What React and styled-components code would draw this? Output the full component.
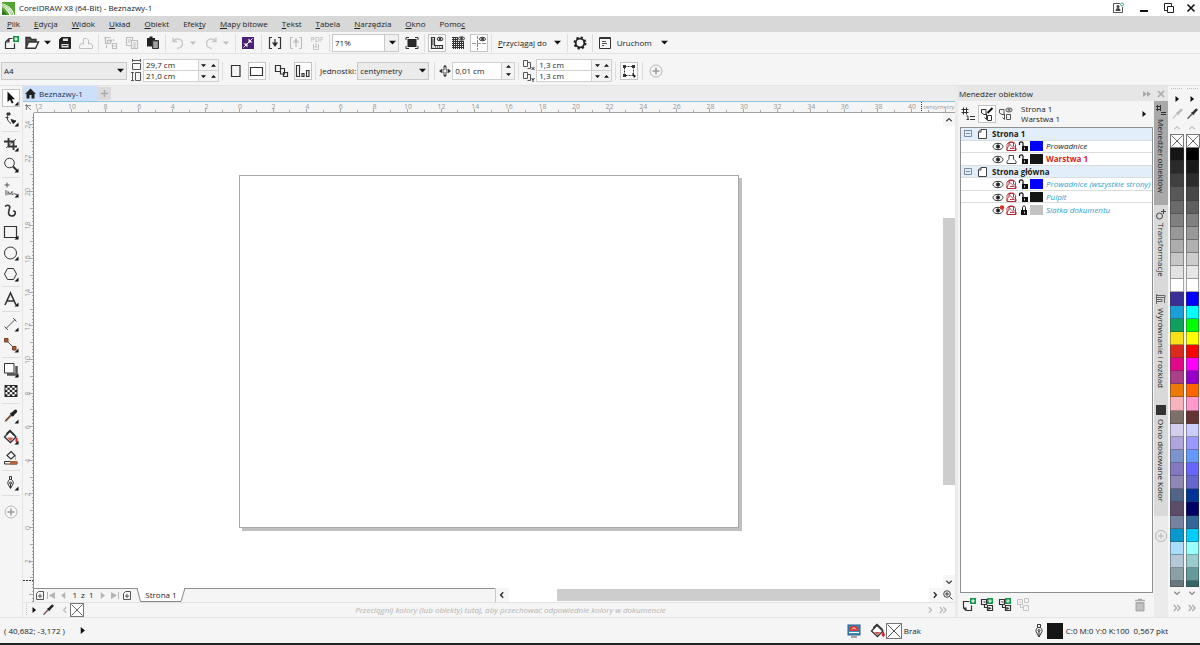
import React from "react";
import styled, { createGlobalStyle, css } from "styled-components";

const GlobalStyle = createGlobalStyle`
  *, *::before, *::after { box-sizing: border-box; }
  body { margin: 0; }
  body, button, input, select {
    font-family: "Open Sans", "Noto Sans", sans-serif;
    font-size: 8px;
    line-height: 12px;
    color: #222;
  }
  button, input, select { margin: 0; padding: 0; border: 0; background: none; border-radius: 0; }
  svg { display: block; flex: none; }
  ul { list-style: none; margin: 0; padding: 0; }
`;

/* ---------- frame ---------- */
const Window = styled.div`
  display: flex;
  flex-direction: column;
  min-height: 100vh;
  background: #f5f5f5;
  border-bottom: 2px solid #1d2422;
`;
const TitleBar = styled.header`
  display: flex;
  align-items: center;
  gap: 4px;
  height: 16px;
  padding: 0 1px 0 2px;
  background: #fff;
`;
const Title = styled.h1`
  flex: 1;
  margin: 0;
  font-size: 8px;
  font-weight: 400;
  line-height: 14px;
`;
const WindowControls = styled.div`
  display: flex;
  gap: 3px;
`;
const WindowButton = styled.button`
  display: grid;
  place-items: center;
  width: ${(p) => p.$w || 20}px;
  height: 16px;
`;
const MenuBar = styled.nav`
  display: flex;
  align-items: center;
  gap: 14px;
  height: 16px;
  padding: 0 7px;
  background: #d8d8d8;
`;
const MenuItem = styled.button`
  white-space: nowrap;
`;
const Toolbar = styled.div`
  display: flex;
  align-items: center;
  gap: 1px;
  height: ${(p) => p.$h}px;
  padding: ${(p) => (p.$tall ? 2 : 0)}px 0 0 1px;
  border-bottom: 1px solid #e3e3e3;
`;
const IconButton = styled.button`
  display: grid;
  place-items: center;
  flex: none;
  width: ${(p) => p.$w || 20}px;
  height: ${(p) => p.$h || 20}px;
  ${(p) =>
    p.$active &&
    css`
      background: #fff;
      border: 1px solid #c4c4c4;
      width: 18px;
      height: 18px;
      margin: 1px;
    `}
`;
const CaretButton = styled(IconButton)`
  width: 8px;
  margin-right: 3px;
`;
const TextButton = styled.button`
  display: flex;
  align-items: center;
  gap: ${(p) => (p.$tight ? 9 : 7)}px;
  padding: 0 ${(p) => (p.$tight ? 1 : 4)}px;
  height: 18px;
  white-space: nowrap;
`;
const Sep = styled.span`
  flex: none;
  width: 1px;
  height: 18px;
  margin: 0 ${(p) => p.$m || 1}px;
  background: #dedede;
`;
const SelectBox = styled.span`
  display: grid;
  grid-template-columns: 1fr 12px;
  align-items: center;
  flex: none;
  width: ${(p) => p.$w}px;
  height: 18px;
  margin-right: ${(p) => p.$mr || 0}px;
  border: 1px solid #c9c9c9;
  background: ${(p) => (p.$white ? "linear-gradient(to left, #f1f1f1 13px, #c9c9c9 13px, #c9c9c9 14px, #fff 14px)" : "#ebebeb")};
  > * { grid-row: 1; }
  > select { grid-column: 1 / 3; appearance: none; height: 16px; padding-left: 2px; }
  > svg { grid-column: 2; pointer-events: none; justify-self: center; }
`;
const Field = styled.span`
  display: flex;
  flex: none;
  width: ${(p) => p.$w}px;
  height: ${(p) => p.$h || 12}px;
  border: 1px solid #d0d0d0;
  background: #fff;
  & + & { border-top: 0; height: 11px; }
  > input { flex: 1; min-width: 0; padding-left: 2px; }
`;
const Arrows = styled.span`
  display: flex;
  flex-direction: ${(p) => (p.$stack ? "column" : "row")};
  flex: none;
  width: ${(p) => (p.$stack ? 13 : 20)}px;
  border-left: 1px solid #d0d0d0;
  background: #f3f3f3;
  > button { flex: 1; display: grid; place-items: center; }
`;
const Stack = styled.span`
  display: flex;
  flex-direction: column;
  flex: none;
`;
const FieldLabel = styled.label`
  padding-left: 2px;
  white-space: nowrap;
`;

/* ---------- work area ---------- */
const Main = styled.main`
  flex: 1;
  display: flex;
  min-height: 0;
`;
const Toolbox = styled.aside`
  display: flex;
  flex-direction: column;
  align-items: center;
  gap: 1px;
  flex: none;
  width: 22px;
  padding-top: 2px;
  > span { width: 18px; height: 1px; margin: 1px 0; background: #dedede; }
`;
const Document = styled.section`
  flex: 1;
  min-width: 0;
  display: flex;
  flex-direction: column;
  border-left: 1px solid #e4e4e4;
`;
const TabStrip = styled.div`
  display: flex;
  align-items: center;
  height: 16px;
  background: #ececec;
  border-bottom: 1px solid #8cc4e4;
`;
const DocTab = styled.button`
  display: flex;
  align-items: center;
  gap: 3px;
  width: 75px;
  height: 15px;
  padding-left: 2px;
  background: #cde0fa;
  color: #1a3054;
`;
const NewTab = styled.button`
  display: grid;
  place-items: center;
  width: 13px;
  height: 13px;
  background: #dadada;
`;
const RulerRow = styled.div`
  display: flex;
  height: 11px;
`;
const RulerCorner = styled.span`
  display: grid;
  place-items: center;
  flex: none;
  width: 11px;
`;
const HRuler = styled.svg`
  flex: 1;
  min-width: 0;
  height: 11px;
  border-bottom: 1px solid #a2a2a2;
  font-size: 7px;
`;
const Body = styled.div`
  flex: 1;
  display: flex;
`;
const VRuler = styled.svg`
  width: 11px;
  height: auto;
  border-right: 1px solid #8f8f8f;
  font-size: 7px;
`;
const Column = styled.div`
  flex: 1;
  min-width: 0;
  display: flex;
  flex-direction: column;
`;
const CanvasRow = styled.div`
  flex: 1;
  display: flex;
  background: #fff;
`;
const Canvas = styled.div`
  flex: 1;
  position: relative;
  overflow: hidden;
`;
const Sheet = styled.div`
  position: absolute;
  left: 205px;
  top: 62px;
  width: 500px;
  height: 353px;
  background: #fff;
  border: 1px solid #a8a8a8;
  box-shadow: 3px 3px 0 #c0c0c0;
`;
const VScroll = styled.div`
  display: flex;
  flex-direction: column;
  width: 12px;
  > button { display: grid; place-items: center; width: 12px; height: 13px; background: #f6f6f6; }
  > i { flex: 92 0 0; }
  > b { flex: 268 0 0; background: #cdcdcd; }
  > i:nth-of-type(2) { flex: 90 0 0; }
`;
const NavRow = styled.div`
  display: flex;
  height: 14px;
`;
const PageNav = styled.div`
  display: flex;
  align-items: center;
  flex: 461 0 0;
  background: linear-gradient(#8f8f8f, #8f8f8f) top / 100% 1px no-repeat, #f5f5f5;
  border-right: 1px solid #c8c8c8;
`;
const PageCount = styled.span`
  width: 28px;
  text-align: center;
  white-space: pre;
`;
const PageTab = styled.button`
  display: grid;
  align-items: center;
  justify-items: center;
  width: 50px;
  height: 14px;
  margin-left: 4px;
  > * { grid-area: 1 / 1; }
  > span { position: relative; }
`;
const HScroll = styled.div`
  display: flex;
  flex: 460 0 0;
  background: #fff;
  > button { display: grid; place-items: center; width: 13px; background: #f6f6f6; }
  > i { flex: 49 0 0; }
  > b { flex: 323 0 0; margin: 1px 0; background: #cdcdcd; }
`;
const DocPalette = styled.div`
  display: flex;
  align-items: center;
  height: 15px;
  padding-right: 6px;
  border-top: 1px solid #e2e2e2;
  > p { flex: 1; margin: 0; padding-left: 14px; text-align: center; font-style: italic; color: #b4b4b4; }
`;
const NoColor = styled.button`
  display: grid;
  width: ${(p) => p.$s}px;
  height: ${(p) => p.$s}px;
  background: #fff;
  border: 1px solid #777;
`;

/* ---------- docker ---------- */
const Docker = styled.section`
  display: flex;
  flex-direction: column;
  flex: none;
  width: 199px;
  border-left: 3px solid #ebebeb;
`;
const DockerHead = styled.header`
  display: flex;
  align-items: center;
  height: 15px;
  padding-left: 1px;
  margin-right: -14px;
  background: #e6e6e6;
  > h2 { flex: 1; margin: 0; font-size: 8px; font-weight: 400; }
`;
const DockerTools = styled.div`
  display: flex;
  align-items: center;
  height: 26px;
  padding: 0 4px 0 1px;
  > p { flex: 1; margin: 0 0 0 6px; line-height: 10px; }
`;
const Tree = styled.div`
  flex: 1;
  margin: 0 1px 0 2px;
  background: #fff;
  border: 1px solid #8c8f94;
`;
const TreeRows = styled.ul`
  display: grid;
  grid-template-rows: repeat(7, 1fr);
  height: 88px;
`;
const TreeRow = styled.li`
  display: flex;
  align-items: center;
  overflow: hidden;
  white-space: nowrap;
  border-bottom: 1px solid #d9dde0;
  padding-left: 31px;
  gap: 1px;
  font-style: italic;
  color: ${(p) => p.$color || "#222"};
  &:last-child { border-bottom: 0; }
  ${(p) =>
    p.$group &&
    css`
      padding-left: 2px;
      gap: 4px;
      background: #e2eef9;
      font-style: normal;
      font-weight: 700;
    `}
  ${(p) => p.$current && css`font-style: normal; font-weight: 700;`}
`;
const LayerColor = styled.span`
  flex: none;
  width: 13px;
  height: 10px;
  margin-right: 2px;
  background: ${(p) => p.$color};
`;
const DockerFoot = styled.footer`
  display: flex;
  align-items: center;
  height: 24px;
  padding: 0 4px 0 2px;
  > span { flex: 1; }
`;
const DockTabs = styled.nav`
  display: flex;
  flex-direction: column;
  align-items: center;
  flex: none;
  width: 14px;
  margin-top: 15px;
  background: #ebebeb;
`;
const DockTab = styled.button`
  display: flex;
  flex-direction: column;
  align-items: center;
  gap: 3px;
  width: 14px;
  height: ${(p) => p.$h}px;
  padding-top: 3px;
  background: ${(p) => (p.$active ? "#a9a9a9" : "#d9d9d9")};
  > span { writing-mode: vertical-rl; white-space: nowrap; line-height: 12px; }
`;
const Palettes = styled.aside`
  display: flex;
  gap: 2px;
  flex: none;
  width: 32px;
  padding: 0 1px 0 2px;
`;
const Palette = styled.div`
  display: flex;
  flex-direction: column;
  flex: 1;
  min-width: 0;
`;
const PaletteButton = styled.button`
  display: grid;
  place-items: center;
  height: ${(p) => p.$h}px;
`;
const Swatches = styled.div`
  flex: 1;
  display: flex;
  flex-direction: column;
`;
const Swatch = styled.button`
  flex: ${(p) => (p.$cut ? 5 : 13)} 0 0;
  background: ${(p) => p.$c};
  border: 1px solid rgba(60, 60, 60, 0.45);
  border-top: 0;
`;

/* ---------- status ---------- */
const StatusBar = styled.footer`
  display: flex;
  align-items: center;
  height: 26px;
  padding: 0 32px 0 4px;
  border-top: 1px solid #e4e4e4;
`;
const Coords = styled.span`
  width: 75px;
`;
const Spacer = styled.span`
  flex: 1;
`;
const StatusGroup = styled.span`
  display: flex;
  align-items: center;
  width: ${(p) => (p.$w ? p.$w + "px" : "auto")};
  white-space: pre;
`;
const OutlineColor = styled.span`
  width: 16px;
  height: 16px;
  margin-right: 3px;
  background: #151515;
`;

/* ---------- icons ---------- */
const Svg = ({ s = 16, w, h, children, c = "#333", sw = 1, ...rest }) => (
  <svg
    width={w || s}
    height={h || s}
    viewBox={`0 0 ${w || s} ${h || s}`}
    fill="none"
    stroke={c}
    strokeWidth={sw}
    aria-hidden="true"
    {...rest}
  >
    {children}
  </svg>
);
const Tri = ({ d = "down", c = "#111", s = 7 }) => {
  const paths = {
    down: `M0 ${s / 4}H${s}L${s / 2} ${s * 0.8}Z`,
    up: `M0 ${s * 0.75}H${s}L${s / 2} ${s / 5}Z`,
    right: `M${s / 4} 0V${s}L${s * 0.85} ${s / 2}Z`,
    left: `M${s * 0.75} 0V${s}L${s * 0.15} ${s / 2}Z`,
  };
  return (
    <Svg s={s}>
      <path d={paths[d]} fill={c} stroke="none" />
    </Svg>
  );
};
const Chevron = ({ d = "down", c = "#444", double, s = 8 }) => {
  const rot = { right: 0, down: 90, left: 180, up: 270 }[d];
  return (
    <Svg s={s} c={c} sw={1.3}>
      <g transform={`rotate(${rot} ${s / 2} ${s / 2})`}>
        {double ? <path d="M0.8 1L3.6 4L0.8 7M4.3 1L7.1 4L4.3 7" /> : <path d="M2.8 1.3L5.4 4L2.8 6.7" />}
      </g>
    </Svg>
  );
};
const Plus = () => (
  <Svg c="#b5b5b5">
    <circle cx="8" cy="8" r="6" />
    <path d="M8 4.5v7M4.5 8h7" stroke="#999" strokeWidth="1.4" />
  </Svg>
);
const Cross = () => (
  <Svg viewBox="0 0 12 12" width="100%" height="100%" c="#444" sw={0.8}>
    <path d="M0.5 0.5L11.5 11.5M11.5 0.5L0.5 11.5" />
  </Svg>
);
const Dropper = ({ c = "#222", tip = "#a88", s = 14 }) => (
  <svg width={s} height={s} viewBox="0 0 14 14" fill="none" aria-hidden="true">
    <path d="M2 12.200L8 6.200" stroke={tip} strokeWidth="1.800" />
    <path d="M1.500 12.700L7 6.200" stroke={c} strokeWidth="0.600" />
    <path d="M6.600 5L9.200 7.600" stroke={c} strokeWidth="1.600" />
    <path d="M8.300 5.900L12 2.200" stroke={c} strokeWidth="3" strokeLinecap="round" />
  </svg>
);
const Bucket = () => (
  <Svg>
    <path d="M7 2L13 8L7.500 13.500L1.500 8Z" fill="#fff" strokeWidth="1.300" />
    <path d="M4 9H10.500L7.500 12Z" fill="#cf5a50" stroke="none" />
    <path d="M3.500 5L7 1.800L12.500 7" strokeWidth="1.800" />
    <path d="M13 9c1.600 2 1.800 4 .3 4.500c-1.500-.4-1.200-2.500-.3-4.500Z" fill="#c22" stroke="#c22" />
  </Svg>
);
const Nib = () => (
  <Svg>
    <path d="M6.500 1.500h3v3h-3zM6.500 4.500C5.200 6 4.800 7.300 5 8.500L8 14l3-5.500c.2-1.200-.2-2.500-1.500-4M8 8.500V14" />
    <circle cx="8" cy="7.500" r="1" />
  </Svg>
);
const Flyout = () => <path d="M15.500 11.500v4h-4z" fill="#111" stroke="none" />;
const PlusBadge = ({ x, y }) => (
  <g stroke="none">
    <rect x={x} y={y} width="6" height="6" fill="#16964a" />
    <path d={`M${x + 3} ${y + 1.2}v3.6M${x + 1.2} ${y + 3}h3.6`} stroke="#fff" />
  </g>
);

const icons = {
  new: <Svg sw={1.2}><path d="M9.500 3.500H6L2.500 7V13.500H11.500V8.500M6 3.500V7H2.500" /><PlusBadge x={10} y={1} /></Svg>,
  open: (
    <Svg>
      <path d="M2 13V2.500H6L7.500 4.500H12V7" strokeWidth="1.400" fill="#555" />
      <path d="M2 13.200L4.500 7H14.500L11.500 13.200Z" fill="#fff" strokeWidth="1.400" />
    </Svg>
  ),
  save: (
    <Svg>
      <path d="M4.500 2.500H13.500V13.500H2.500V4.500Z" fill="#222" stroke="#222" />
      <path d="M6 3.500h5v2.500h-5zM4.500 9h7v3.500h-7z" fill="#e4e4e4" stroke="none" />
      <path d="M5.500 10.500h5" />
    </Svg>
  ),
  print: <Svg c="#c2c2c2"><path d="M5.500 9.500V3.500H9L10.500 5V9.500M5 8.500H3L1.500 11V13.500H14.500V11L13 8.500H11" /></Svg>,
  cut: <Svg c="#bdbdbd" sw={1.2}><path d="M2 4V2.500h5.500M2.500 3v5.500h2M5.500 5h3v2M4.500 5.500h3v3h-3zM3.500 10v3M9.500 8.500h4v5h-4zM10.500 11h2M10.500 4v2" /></Svg>,
  copy: <Svg c="#bdbdbd" sw={1.2}><path d="M7 10.500H2.500V2.500H8.500V5M4 5h3M4 7h2M7.500 5.500h6v8h-6zM9 8h3M9 10h3M9 12h3" /></Svg>,
  paste: (
    <Svg>
      <path d="M2 3H10V11.500H2Z" fill="#222" stroke="none" />
      <path d="M4.500 2.500h3" stroke="#222" strokeWidth="2" />
      <path d="M7.500 5.500h6v8h-6z" fill="#777" stroke="#333" />
      <path d="M8.500 8h4M8.500 10h4M8.500 12h4" stroke="#ccc" />
    </Svg>
  ),
  undo: <Svg c="#c4c4c4" sw={1.3}><path d="M3 2.500v4h4M3.500 6C6 2.500 12.500 3.500 12.500 8.500c0 3-2.500 4.800-5.500 4.800" /></Svg>,
  redo: <Svg c="#c4c4c4" sw={1.3}><path d="M13 2.500v4H9M12.500 6C10 2.500 3.500 3.500 3.500 8.500c0 3 2.500 4.800 5.500 4.800" /></Svg>,
  launch: (
    <Svg>
      <rect x="2" y="2" width="12" height="12" fill="#4a2079" stroke="none" />
      <path d="M3.500 12.500L12.500 3.500" stroke="#fff" strokeWidth="1" />
      <path d="M8.500 3.500v4h4zM3.500 8.500h4v4z" fill="#fff" stroke="none" />
    </Svg>
  ),
  import: <Svg sw={1.2}><path d="M5 2.500H2.500V13.500H5M11 2.500H13.500V13.500H11M8 4V11" /><path d="M6 8L8 11L10 8Z" fill="#222" /></Svg>,
  export: <Svg c="#c0c0c0" sw={1.2}><path d="M5 2.500H2.500V13.500H5M11 2.500H13.500V13.500H11M8 12V5" /><path d="M6 7L8 4L10 7Z" fill="#c0c0c0" /></Svg>,
  full: (
    <Svg>
      <rect x="4" y="4.500" width="8" height="7" fill="#2c2c2c" stroke="#222" />
      <path d="M2 5V2.500H5M11 2.500H14V5M2 11V13.500H5M11 13.500H14V11" />
    </Svg>
  ),
  rulers: (
    <Svg>
      <path d="M2.500 2.500H5.500V10.500H13.500V13.500H2.500Z" fill="#ddd" strokeWidth="1.200" />
      <path d="M3 5h1.500M3 7h1.500M3 9h1.500M6 12h1M8 12h1M10 12h1" />
      <ellipse cx="11" cy="4" rx="3" ry="1.800" /><circle cx="11" cy="4" r="1" fill="#333" />
    </Svg>
  ),
  grid: (
    <Svg c="#333">
      <path d="M2 2.500H8M2 4.500H8M2 6.500H14M2 8.500H14M2 10.500H14M2 12.500H14M3.500 2V14M5.500 2V14M7.500 2V14M9.500 6V14M11.500 6V14M13.500 6V14" />
      <ellipse cx="11.500" cy="3.500" rx="3" ry="1.700" /><circle cx="11.500" cy="3.500" r="1" fill="#333" />
    </Svg>
  ),
  guides: (
    <Svg>
      <path d="M6.500 1V15" strokeDasharray="3 1" stroke="#888" /><path d="M1 8.500H15" strokeDasharray="4 1" stroke="#999" />
      <ellipse cx="11.500" cy="4" rx="3" ry="1.800" /><circle cx="11.500" cy="4" r="1" fill="#333" />
    </Svg>
  ),
  gear: (
    <Svg>
      <circle cx="8" cy="8" r="5.500" stroke="#222" strokeWidth="2" strokeDasharray="2.200 2.120" />
      <circle cx="8" cy="8" r="4.300" stroke="#222" strokeWidth="1.800" />
    </Svg>
  ),
  run: <Svg><path d="M2.500 2.500H13.500V13.500H2.500ZM2.500 3.500H13.500" /><path d="M5 6.500h4M5 8.500h5M5 10.500h2" stroke="#555" /></Svg>,
  portrait: <Svg><path d="M3.500 2.500H12V13.500H3.500Z" strokeWidth="1.200" /></Svg>,
  landscape: <Svg><path d="M1.500 4.500H13.500V12.500H1.500Z" strokeWidth="1.200" /></Svg>,
  pages: <Svg><path d="M9.500 9.500h4v4h-4zM6.500 5.500h4v5.500h-4zM1.500 2.500h5v6h-5z" fill="#f5f5f5" strokeWidth="1.200" /></Svg>,
  current: <Svg><path d="M1.500 2.500h3v11h-3zM7 10.500h2v3h-2zM11.500 7.500h2.500v6h-2.500z" strokeWidth="1.200" /></Svg>,
  nudge: (
    <Svg w={12} h={14}>
      <path d="M4 5h4v4h-4z" stroke="#555" />
      <path d="M6 .8L8.200 3.500H3.800ZM6 13.200L8.200 10.500H3.800ZM0 7L3 4.800V9.200ZM12 7L9 4.800V9.200Z" fill="#333" stroke="none" />
    </Svg>
  ),
  bounds: (
    <Svg>
      <path d="M3.500 3.500H12.500V12.500H3.500Z" strokeDasharray="2 1" />
      <path d="M2 2h3v3H2zM11 2h3v3h-3zM2 11h3v3H2z" fill="#333" stroke="none" /><path d="M11 10l4 3l-2 2z" fill="#111" stroke="none" />
    </Svg>
  ),
  objects: <Svg><path d="M1.500 3.500h7M1.500 6.500h7M3.500 1.500v7M6.500 1.500v7M6.500 10h1.500v3.500h-1.500M10 10.500h5M10 13.500h5M8 13.500h1" /></Svg>,
  editLayers: (
    <Svg>
      <path d="M2.500 3.500h4.500v5h-2l-2.500-1.500zM7.500 7.500v6l-2-2M8.500 9.500h4v5h-4z" />
      <path d="M8.500 7L13.500 2" stroke="#111" strokeWidth="2" />
    </Svg>
  ),
  viewLayers: (
    <Svg c="#555">
      <path d="M1.500 3.500h4.500v5h-2l-2.500-1.500zM6.500 7.500v6l-2-2M8.500 8.500h4v5h-4z" />
      <ellipse cx="11" cy="4" rx="3.200" ry="2" /><circle cx="11" cy="4" r="1" />
    </Svg>
  ),
  newLayer: <Svg sw={1.2}><path d="M8.500 4.500H2.500V11L5 13.500H10.500V8.500M2.500 11H5V13.500" /><PlusBadge x={9} y={1} /></Svg>,
  newMaster: (
    <Svg>
      <path d="M2.500 2.500h5v5h-5zM4.500 5h2M5.500 7.500v3h3M8.500 8.500h5v5h-5zM10 10v2l2-1" strokeWidth="1.200" /><PlusBadge x={8} y={1} />
    </Svg>
  ),
  masterOff: <Svg c="#c4c4c4"><path d="M2.500 2.500h5v5h-5zM4.500 5h2M5.500 7.500v3h3M8.500 8.500h5v5h-5zM9.500 1.500h4v4h-4z" /></Svg>,
  trash: (
    <Svg>
      <path d="M3 3.500h10M6 2.500h4" stroke="#aaa" strokeWidth="1.600" /><path d="M4 5.500h8v8.500H4z" fill="#b4b4b4" stroke="#aaa" />
      <path d="M6 7v6M8 7v6M10 7v6" stroke="#ddd" strokeWidth=".6" />
    </Svg>
  ),
};

const tools = [
  ["Wskaźnik", <Svg><path d="M4.500 1.500V12L7 9.800L8.800 13.500L10.500 12.700L8.800 9.200H12Z" fill="#111" stroke="none" /><Flyout /></Svg>, true],
  ["Kształt", <Svg><path d="M5 3.500C3.500 6 4 10 8 12.500M2.500 6.500h3" /><path d="M4 2h3v2H4z" fill="#444" /><path d="M8 8.500l5 1.500l-3 2.500z" fill="#111" /><Flyout /></Svg>],
  null,
  ["Kadrowanie", <Svg sw={1.8}><path d="M1 5.500H10.500V14M5.500 2V10.500H14" /><path d="M3 12L13 3" strokeWidth=".8" /><Flyout /></Svg>],
  ["Lupka", <Svg><circle cx="6.500" cy="6" r="4.800" /><path d="M10 9.500L14 13.500" strokeWidth="2" /><Flyout /></Svg>],
  null,
  ["Krzywa", <Svg c="#555"><path d="M4 .5v5M1.500 3h5M3 8v5.500M5 13V9.500l2 3l2-3v3c1 1 2-2 3-.5l2 .5" /><Flyout /></Svg>],
  ["Środki artystyczne", <Svg sw={1.6}><path d="M2 3.500C5 1 7.500 2.500 6.500 5.500C5 10 5 12.500 8.500 13C13 13 13.500 7.500 10 8" /></Svg>],
  ["Prostokąt", <Svg><path d="M1.500 2.500H13.500V13.500H1.500Z" strokeWidth="1.200" /><Flyout /></Svg>],
  ["Elipsa", <Svg><circle cx="7.500" cy="8" r="6" /><Flyout /></Svg>],
  ["Wielokąt", <Svg><path d="M4.500 2.500H10.500L13.500 8L10.500 13.500H4.500L1.500 8Z" /><Flyout /></Svg>],
  null,
  ["Tekst", <Svg sw={1.6}><path d="M2 14L7.500 2L13 14M4 10H11" /><Flyout /></Svg>],
  null,
  ["Wymiar", <Svg><path d="M3 12.500L12 3.500M1.500 10.500L5 14M10 2L13.500 5.500" stroke="#555" /><Flyout /></Svg>],
  ["Łącznik", <Svg><path d="M4 4L12 12" stroke="#555" /><path d="M1.500 1.500h3.500v3.500h-3.500zM9.500 9.500h3.500v3.500h-3.500z" fill="#a85c38" stroke="#7a3d22" /><Flyout /></Svg>],
  null,
  ["Cień", <Svg><path d="M4 12.500h9.500V4" stroke="#555" strokeWidth="2.500" /><path d="M1.500 1.500H11V11H1.500Z" fill="#fff" /><Flyout /></Svg>],
  [
    "Przezroczystość",
    <Svg>
      <rect x="2" y="2.500" width="12" height="11" fill="#fff" />
      {[0, 1, 2, 3, 4].map((r) => [0, 1, 2].map((k) => (
        <rect key={r + "-" + k} x={2 + k * 4.8 + (r % 2) * 2.4} y={2.5 + r * 2.2} width={r % 2 && k === 2 ? 0 : 2.4} height="2.200" fill="#222" stroke="none" />
      )))}
    </Svg>,
  ],
  null,
  ["Kroplomierz", <Svg><path d="M2.500 13L9 6.500" stroke="#a0664a" strokeWidth="2" /><path d="M1.800 13.500L8 6.500" strokeWidth=".7" /><path d="M7.500 5L10.500 8" stroke="#222" strokeWidth="1.800" /><path d="M9.500 6.200L12.500 3.200" stroke="#222" strokeWidth="3.400" strokeLinecap="round" /><Flyout /></Svg>],
  ["Wypełnienie", <Svg><path d="M7 2L13 8L7.500 13.500L1.500 8Z" fill="#fff" strokeWidth="1.400" /><path d="M4 8.500H10.500L7.500 12Z" fill="#cf5a50" stroke="none" /><path d="M3.500 5L7 1.800L12 6.800" strokeWidth="1.800" /><path d="M13.500 9v4" stroke="#c22" strokeWidth="2" /><Flyout /></Svg>],
  ["Inteligentne wypełnienie", <Svg><path d="M8 1.500L12 5.500L8 9L4 5.500Z" fill="#fff" strokeWidth="1.200" /><path d="M1.500 11.500H14V14H1.500Z" fill="#fff" /><path d="M7 11h7v3.500H7z" fill="#b0643c" stroke="none" /><path d="M12.500 6v4" stroke="#e0a080" /></Svg>],
  null,
  ["Pióro konturu", <Svg><path d="M6.500 1.500h2v3h-2zM6.500 4.500C5 6 4.500 7.500 5 9L7.500 13.500L10 9c.5-1.500 0-3-1.500-4.500M7.500 9v4" /><circle cx="7.500" cy="8" r="1" /><Flyout /></Svg>],
  null,
  ["Dostosuj", <Plus />, false, 28],
];

const LayerEye = ({ off }) => (
  <Svg w={13} h={10}>
    <ellipse cx="6" cy="5.500" rx="5" ry="3.200" fill="#fff" /><circle cx="6" cy="5.500" r="1.700" fill="#222" />
    {off && <circle cx="10" cy="2.500" r="2.200" fill="#d32" stroke="none" />}
  </Svg>
);
const LayerPrint = ({ off }) => (
  <Svg w={11} h={10} c={off ? "#b22b36" : "#444"}>
    <path d="M3 5.500V1.500H7.500V5.500M2.500 5.500L1 7.500V9.500H10V7.500L8.500 5.500" />
    {off && <path d="M1 3.500C2 0 8.500 0 9.500 3.500V9.500M1 3.500V9M2.500 2L9 8.500M4 7.500h4" strokeWidth=".9" />}
  </Svg>
);
const LayerLock = ({ locked }) => (
  <Svg w={11} h={10} c="#111">
    {locked ? <path d="M4.500 5V2.500C4.500 .5 7.500 .5 7.500 2.500V5" /> : <path d="M1.500 4V2C1.500 .5 5 .5 5 2V5" strokeWidth="1.200" />}
    <rect x={locked ? 3 : 4} y="5" width="6" height="5" fill="#111" stroke="none" />
    <path d="M6.500 6.500v2" stroke="#fff" strokeWidth=".8" />
  </Svg>
);
const PageIcon = () => (
  <Svg w={11} h={11} c="#444"><path d="M4 1.500H9.500V10.500H1.500V4ZM4 1.500V4H1.500" fill="#fff" /></Svg>
);

/* ---------- data ---------- */
const menu = [
  ["", "P", "lik"], ["", "E", "dycja"], ["", "W", "idok"], ["", "U", "kład"], ["", "O", "biekt"], ["Efek", "t", "y"],
  ["", "M", "apy bitowe"], ["", "T", "ekst"], ["", "T", "abela"], ["", "N", "arzędzia"], ["", "O", "kno"], ["Pomo", "c", ""],
];
const cmyk = [
  "#161616", "#2a2a2a", "#404040", "#585858", "#6a6a6a", "#808080", "#989898", "#adadad", "#c6c6c6", "#e2e2e2", "#fff",
  "#3a2f96", "#1a9fd8", "#10a05c", "#f7e01a", "#dc2a20", "#e0098a", "#a8408a", "#ec7a08", "#f8b4bc", "#7c7068", "#d4ceee",
  "#b0a4dc", "#7c94cc", "#8478c0", "#9088b4", "#506488", "#5c4c68", "#7484a0", "#0898cc", "#a8dcf8", "#b4c8d8", "#8ca0a8", "#6c7880",
];
const rgb = [
  "#000", "#191919", "#2c2c2c", "#484848", "#606060", "#808080", "#999", "#b0b0b0", "#ccc", "#e6e6e6", "#fff",
  "#00f", "#0ff", "#0f0", "#ff0", "#f00", "#f0f", "#90c", "#f60", "#f9c", "#633", "#ccf",
  "#99f", "#69f", "#66f", "#66c", "#039", "#006", "#369", "#0cf", "#9ff", "#9cc", "#699", "#366",
];
const layers = [
  { group: "Strona 1" },
  { name: "Prowadnice", swatch: "#00f", noPrint: true },
  { name: "Warstwa 1", swatch: "#151515", color: "#d8231b", current: true },
  { group: "Strona główna" },
  { name: "Prowadnice (wszystkie strony)", swatch: "#00f", noPrint: true, color: "#2ba3d4" },
  { name: "Pulpit", swatch: "#151515", noPrint: true, color: "#2ba3d4" },
  { name: "Siatka dokumentu", swatch: "#c2c2c2", noPrint: true, hidden: true, locked: true, color: "#2ba3d4" },
];
const CM = 16.8;

/* ---------- parts ---------- */
function Spin({ label, value, w, h, stack }) {
  return (
    <Field $w={w} $h={h}>
      <input aria-label={label} defaultValue={value} />
      <Arrows $stack={stack}>
        <button aria-label={label + " +"}><Tri d={stack ? "up" : "down"} s={5} /></button>
        <button aria-label={label + " -"}><Tri d={stack ? "down" : "up"} s={5} /></button>
      </Arrows>
    </Field>
  );
}

function HorizontalRuler() {
  const zero = 205;
  const ticks = [];
  for (let i = -60; i <= 213; i++) {
    const x = Math.round(zero + (i * CM) / 5) + 0.5;
    const len = i % 10 === 0 ? 4 : i % 5 === 0 ? 3 : 1;
    ticks.push(`M${x} 11v-${len}`);
  }
  const labels = [];
  for (let n = -12; n <= 40; n += 2) labels.push(n);
  return (
    <HRuler aria-label="Linijka pozioma">
      <path d={ticks.join("")} stroke="#aaa" />
      {labels.map((n) => (
        <text key={n} x={zero + n * CM + 1} y="7" textAnchor="middle" fill="#999">{Math.abs(n)}</text>
      ))}
      <path d="M887.500 0v11" stroke="#333" strokeDasharray="1 1" />
      <text x="889" y="7" fontSize="6" fill="#999">centymetry</text>
    </HRuler>
  );
}

function VerticalRuler() {
  const zero = 414;
  const ticks = [];
  for (let i = -22; i <= 122; i++) {
    const y = Math.round(zero - (i * CM) / 5) + 0.5;
    const len = i % 10 === 0 ? 4 : i % 5 === 0 ? 3 : 1;
    ticks.push(`M10 ${y}h-${len}`);
  }
  const labels = [];
  for (let n = -2; n <= 24; n += 2) labels.push(n);
  return (
    <VRuler aria-label="Linijka pionowa">
      <path d={ticks.join("")} stroke="#aaa" />
      {labels.map((n) => (
        <text key={n} transform={`translate(7 ${zero - n * CM + 1}) rotate(-90)`} textAnchor="middle" fill="#999">{Math.abs(n)}</text>
      ))}
      <path d="M0 467.500h10" stroke="#333" strokeDasharray="2 1" />
    </VRuler>
  );
}

function ColorPalette({ colors, name, enabled }) {
  return (
    <Palette aria-label={name}>
      <Svg w={13} h={5} c="#bbb"><path d="M1 2.500h11" strokeDasharray="1 1" /></Svg>
      <PaletteButton $h={15} aria-label="Menu palety"><Tri d="right" s={6} /></PaletteButton>
      <PaletteButton $h={16} aria-label="Kroplomierz"><Dropper s={12} c={enabled ? "#333" : "#bbb"} tip={enabled ? "#777" : "#d0d0d0"} /></PaletteButton>
      <PaletteButton $h={12} aria-label="W górę"><Chevron d="up" c="#c4c4c4" /></PaletteButton>
      <NoColor $s={14} aria-label="Brak koloru"><Cross /></NoColor>
      <Swatches>
        {colors.map((c, i) => (
          <Swatch key={i} $c={c} $cut={i === colors.length - 1} aria-label={c} />
        ))}
      </Swatches>
      <PaletteButton $h={12} aria-label="W dół"><Chevron c="#888" /></PaletteButton>
      <PaletteButton $h={18} aria-label="Rozwiń"><Chevron d="right" double c="#aaa" /></PaletteButton>
    </Palette>
  );
}

export default function App() {
  return (
    <Window>
      <GlobalStyle />
      <TitleBar>
        <Svg s={13}>
          <rect width="13" height="13" fill="#55a630" stroke="none" />
          <path d="M0 1.500C6 2.500 11 7 12.500 13H7.500C5.500 9 3 6 0 5Z" fill="#fff" stroke="none" />
          <path d="M0 2.500C6 4 9.500 8 11 13M0 4C5 5.500 8 9 9.500 13" stroke="#55a630" strokeWidth=".7" />
          <path d="M0 8C2 9 4 11 5 13H0Z" fill="#2f7a22" stroke="none" />
        </Svg>
        <Title>CorelDRAW X8 (64-Bit) - Beznazwy-1</Title>
        <WindowControls>
          <WindowButton $w={24} aria-label="Konto">
            <Svg s={12}><path d="M8 1.500H1.500V10.500H10.500V5" stroke="#555" /><circle cx="6" cy="4.500" r="1.500" fill="#444" stroke="none" /><path d="M3.500 9c0-4 5-4 5 0z" fill="#444" stroke="none" /><circle cx="10" cy="2.500" r="1.500" stroke="#5bb08f" /></Svg>
          </WindowButton>
          <WindowButton $w={22} aria-label="Minimalizuj"><Svg s={10} c="#111" sw={2}><path d="M1 8h8" /></Svg></WindowButton>
          <WindowButton $w={22} aria-label="Przywróć"><Svg s={10} c="#222"><path d="M3.500 7.500H.5V.5H7.500V3.500M3.500 3.500H9.500V9.500H3.500Z" /></Svg></WindowButton>
          <WindowButton $w={16} aria-label="Zamknij"><Svg s={10} c="#111" sw={1.6}><path d="M1.500 1.500L8.500 8.500M8.500 1.500L1.500 8.500" /></Svg></WindowButton>
        </WindowControls>
      </TitleBar>
      <MenuBar>
        {menu.map(([a, u, b]) => (
          <MenuItem key={a + u + b}>{a}<u>{u}</u>{b}</MenuItem>
        ))}
      </MenuBar>

      <Toolbar $h={22}>
        <IconButton aria-label="Nowy">{icons.new}</IconButton>
        <IconButton aria-label="Otwórz">{icons.open}</IconButton>
        <CaretButton aria-label="Ostatnie"><Tri s={7} /></CaretButton>
        <IconButton aria-label="Zapisz">{icons.save}</IconButton>
        <IconButton aria-label="Drukuj">{icons.print}</IconButton>
        <Sep />
        <IconButton aria-label="Wytnij">{icons.cut}</IconButton>
        <IconButton aria-label="Kopiuj">{icons.copy}</IconButton>
        <IconButton aria-label="Wklej">{icons.paste}</IconButton>
        <Sep />
        <IconButton aria-label="Cofnij">{icons.undo}</IconButton>
        <CaretButton aria-label="Lista cofania"><Tri s={6} c="#bbb" /></CaretButton>
        <IconButton aria-label="Ponów">{icons.redo}</IconButton>
        <CaretButton aria-label="Lista ponawiania"><Tri s={6} c="#bbb" /></CaretButton>
        <Sep />
        <IconButton aria-label="Uruchom Connect">{icons.launch}</IconButton>
        <Sep $m={2} />
        <IconButton aria-label="Importuj">{icons.import}</IconButton>
        <IconButton aria-label="Eksportuj">{icons.export}</IconButton>
        <IconButton aria-label="Publikuj do PDF">
          <Svg c="#c4c4c4"><text x="8" y="7" fontSize="7" fontWeight="600" textAnchor="middle" fill="#c4c4c4" stroke="none">PDF</text><path d="M4.500 9v5.500h5V9M7 8v4.500M5.500 11L7 12.500L8.500 11" /></Svg>
        </IconButton>
        <Sep />
        <SelectBox $w={67} $mr={2} $white>
          <select aria-label="Powiększenie" defaultValue="71%"><option>71%</option></select>
          <Tri s={7} />
        </SelectBox>
        <IconButton aria-label="Podgląd pełnoekranowy">{icons.full}</IconButton>
        <Sep />
        <IconButton $active aria-label="Pokaż linijki">{icons.rulers}</IconButton>
        <IconButton aria-label="Pokaż siatkę">{icons.grid}</IconButton>
        <IconButton $active aria-label="Pokaż prowadnice">{icons.guides}</IconButton>
        <Sep />
        <TextButton><span><u>P</u>rzyciągaj do</span><Tri s={7} /></TextButton>
        <Sep />
        <IconButton aria-label="Opcje">{icons.gear}</IconButton>
        <Sep />
        <IconButton aria-label="Okno uruchamiania">{icons.run}</IconButton>
        <TextButton $tight><span>Uruchom</span><Tri s={7} /></TextButton>
      </Toolbar>

      <Toolbar $h={32} $tall>
        <SelectBox $w={126} $mr={3}>
          <select aria-label="Rozmiar strony" defaultValue="A4"><option>A4</option></select>
          <Tri s={7} />
        </SelectBox>
        <Svg w={11} h={24} c="#555">
          <path d="M1.500 4.500h8v6h-8zM1 1.500h9M1.500 0v3M9.500 0v3M4.500 13.500h5v8h-5zM1.500 13v9M0 13.500h3M0 21.500h3" />
        </Svg>
        <Stack>
          <Spin label="Szerokość strony" value="29,7 cm" w={76} />
          <Spin label="Wysokość strony" value="21,0 cm" w={76} />
        </Stack>
        <Sep $m={2} />
        <IconButton aria-label="Pionowo">{icons.portrait}</IconButton>
        <IconButton $active aria-label="Poziomo">{icons.landscape}</IconButton>
        <Sep />
        <IconButton aria-label="Wszystkie strony">{icons.pages}</IconButton>
        <IconButton $active aria-label="Bieżąca strona">{icons.current}</IconButton>
        <Sep />
        <FieldLabel htmlFor="units">Jednostki:</FieldLabel>
        <SelectBox $w={72} $mr={1}>
          <select id="units" defaultValue="centymetry"><option>centymetry</option></select>
          <Tri s={7} />
        </SelectBox>
        <Sep $m={3} />
        {icons.nudge}
        <Spin label="Odległość przesunięcia" value="0,01 cm" w={63} h={18} stack />
        <Sep $m={2} />
        <Svg w={13} h={24} c="#555">
          <path d="M1.500 1.500h4v6h-4zM5.500 3.500h3v6h-3M1.500 13.500h4v6h-4zM5.500 15.500h3v6h-3" />
          <path d="M9.500 8l3 3M12.500 8l-3 3M9.500 19l1.500 2l1.500-2M11 21v2" stroke="#333" />
        </Svg>
        <Stack>
          <Spin label="Odległość powielania x" value="1,3 cm" w={76} />
          <Spin label="Odległość powielania y" value="1,3 cm" w={76} />
        </Stack>
        <Sep $m={2} />
        <IconButton $active aria-label="Traktuj jako wypełnione">{icons.bounds}</IconButton>
        <Sep $m={2} />
        <IconButton aria-label="Dostosuj"><Plus /></IconButton>
      </Toolbar>

      <Main>
        <Toolbox aria-label="Przybornik">
          {tools.map((t, i) =>
            t ? <IconButton key={i} $active={t[2]} $h={t[3]} aria-label={t[0]}>{t[1]}</IconButton> : <span key={i} />
          )}
        </Toolbox>

        <Document>
          <TabStrip>
            <DocTab>
              <Svg s={11}><path d="M0 6L5.500 .5L11 6H9.500V10.500H6.500V7H4.500V10.500H1.500V6Z" fill="#222" stroke="none" /></Svg>
              Beznazwy-1
            </DocTab>
            <NewTab aria-label="Nowy dokument"><Svg s={9} c="#aaa" sw={1.5}><path d="M4.500 1v7M1 4.500h7" /></Svg></NewTab>
          </TabStrip>
          <RulerRow>
            <RulerCorner><Svg s={7} c="#888"><path d="M1.500 0v6M0 1.500h6M2 2l4 4" /></Svg></RulerCorner>
            <HorizontalRuler />
          </RulerRow>
          <Body>
            <VerticalRuler />
            <Column>
              <CanvasRow>
                <Canvas><Sheet /></Canvas>
                <VScroll>
                  <button aria-label="W górę"><Chevron d="up" /></button>
                  <i /><b /><i />
                  <button aria-label="W dół"><Chevron /></button>
                </VScroll>
              </CanvasRow>
              <NavRow>
                <PageNav>
                  <IconButton $w={11} $h={14} aria-label="Dodaj stronę przed"><Svg w={8} h={9} c="#555"><path d="M2.500 .5h5v8h-7v-6zM4 3v4M2 5h4" /></Svg></IconButton>
                  <IconButton $w={13} $h={14} aria-label="Pierwsza strona"><Svg w={9} h={7} c="#b5b5b5"><path d="M.5 0v7" /><path d="M8 0v7L2 3.500z" fill="#b5b5b5" stroke="none" /></Svg></IconButton>
                  <IconButton $w={11} $h={14} aria-label="Poprzednia strona"><Tri d="left" c="#b5b5b5" /></IconButton>
                  <PageCount>1  z  1</PageCount>
                  <IconButton $w={11} $h={14} aria-label="Następna strona"><Tri d="right" c="#b5b5b5" /></IconButton>
                  <IconButton $w={13} $h={14} aria-label="Ostatnia strona"><Svg w={9} h={7} c="#b5b5b5"><path d="M8.500 0v7" /><path d="M1 0v7l6-3.500z" fill="#b5b5b5" stroke="none" /></Svg></IconButton>
                  <IconButton $w={11} $h={14} aria-label="Dodaj stronę po"><Svg w={8} h={9} c="#555"><path d="M2.500 .5h5v8h-7v-6zM4 3v4M2 5h4" /></Svg></IconButton>
                  <PageTab>
                    <Svg w={50} h={14}><path d="M1 0L4.500 13.500H45L49 0Z" fill="#fff" stroke="none" /><path d="M1 0L4.500 13.500H45L49 0" stroke="#888" /></Svg>
                    <span>Strona 1</span>
                  </PageTab>
                </PageNav>
                <HScroll>
                  <button aria-label="W lewo"><Chevron d="left" c="#222" /></button>
                  <i /><b /><i />
                  <button aria-label="W prawo"><Chevron d="right" c="#222" /></button>
                  <button aria-label="Nawigator"><Svg s={10} c="#444"><circle cx="4" cy="4" r="3.300" /><path d="M4 2v4M2 4h4M6.500 6.500L9.500 9.500" /></Svg></button>
                </HScroll>
              </NavRow>
            </Column>
          </Body>
          <DocPalette>
            <Svg w={8} h={12} c="#bbb"><path d="M3.500 0v12" strokeDasharray="1 1" /></Svg>
            <Tri d="right" s={6} />
            <IconButton $w={22} $h={14} aria-label="Kroplomierz"><Dropper s={12} tip="#a77" /></IconButton>
            <IconButton $w={11} $h={14} aria-label="Przewiń"><Chevron d="left" c="#bbb" /></IconButton>
            <NoColor $s={14} aria-label="Brak koloru"><Cross /></NoColor>
            <p>Przeciągnij kolory (lub obiekty) tutaj, aby przechować odpowiednie kolory w dokumencie</p>
            <IconButton $w={14} $h={14} aria-label="Dalej"><Chevron d="right" c="#bbb" /></IconButton>
            <IconButton $w={12} $h={14} aria-label="Rozwiń"><Chevron d="right" double c="#bbb" /></IconButton>
          </DocPalette>
        </Document>

        <Docker>
          <DockerHead>
            <h2>Menedżer obiektów</h2>
            <IconButton $w={14} $h={14} aria-label="Zwiń"><Svg s={8}><path d="M0 1v6l4-3zM4 1v6l4-3z" fill="#aaa" stroke="none" /></Svg></IconButton>
            <IconButton $w={14} $h={14} aria-label="Zamknij"><Svg s={8} c="#aaa" sw={1.6}><path d="M1 1l6 6M7 1L1 7" /></Svg></IconButton>
          </DockerHead>
          <DockerTools>
            <IconButton $w={18} aria-label="Właściwości obiektów">{icons.objects}</IconButton>
            <IconButton $active aria-label="Edytuj między warstwami">{icons.editLayers}</IconButton>
            <IconButton $w={18} aria-label="Widok menedżera warstw">{icons.viewLayers}</IconButton>
            <p>Strona 1<br />Warstwa 1</p>
            <IconButton $w={12} aria-label="Opcje menedżera"><Tri d="right" s={6} /></IconButton>
          </DockerTools>
          <Tree>
            <TreeRows>
              {layers.map((l) =>
                l.group ? (
                  <TreeRow key={l.group} $group>
                    <Svg w={10} h={9} c="#7a8a9a"><path d="M1.500 1.500h7v6h-7zM3 4.500h4" /></Svg>
                    <PageIcon />
                    <span>{l.group}</span>
                  </TreeRow>
                ) : (
                  <TreeRow key={l.name} $color={l.color} $current={l.current}>
                    <LayerEye off={l.hidden} />
                    <LayerPrint off={l.noPrint} />
                    <LayerLock locked={l.locked} />
                    <LayerColor $color={l.swatch} />
                    <span>{l.name}</span>
                  </TreeRow>
                )
              )}
            </TreeRows>
          </Tree>
          <DockerFoot>
            <IconButton $w={18} aria-label="Nowa warstwa">{icons.newLayer}</IconButton>
            <IconButton $w={18} aria-label="Nowa warstwa główna">{icons.newMaster}</IconButton>
            <IconButton $w={18} aria-label="Nowa warstwa główna (nieparzyste)">{icons.newMaster}</IconButton>
            <IconButton $w={18} aria-label="Nowa warstwa główna (parzyste)">{icons.masterOff}</IconButton>
            <span />
            <IconButton aria-label="Usuń">{icons.trash}</IconButton>
          </DockerFoot>
        </Docker>

        <DockTabs>
          <DockTab $h={104} $active>
            <Svg s={12}><path d="M1 2.500h5M1 5.500h5M2.500 1v6M5.500 1v6M6 8.500h5M6 10.500h5" /></Svg>
            <span>Menedżer obiektów</span>
          </DockTab>
          <DockTab $h={85}>
            <Svg s={12} c="#444"><circle cx="4.500" cy="8" r="3" /><path d="M8.500 1v5M6 3.500h5" /></Svg>
            <span>Transformacje</span>
          </DockTab>
          <DockTab $h={111}>
            <Svg s={12} c="#666"><path d="M1.500 1v10M2 2.500h8v2H2M2 6.500h5v2H2M9.500 4v6" /></Svg>
            <span>Wyrównanie i rozkład</span>
          </DockTab>
          <DockTab $h={115}>
            <Svg s={12}><rect x="1" y="1" width="10" height="10" fill="#333" stroke="none" /></Svg>
            <span>Okno dokowane Kolor</span>
          </DockTab>
          <IconButton $w={14} $h={40} aria-label="Dodaj okno dokowane"><Svg s={14} c="#b5b5b5"><circle cx="7" cy="7" r="5.500" /><path d="M7 4v6M4 7h6" /></Svg></IconButton>
        </DockTabs>

        <Palettes>
          <ColorPalette name="Paleta CMYK" colors={cmyk} />
          <ColorPalette name="Paleta RGB" colors={rgb} enabled />
        </Palettes>
      </Main>

      <StatusBar>
        <Coords>( 40,682; -3,172 )</Coords>
        <Tri d="right" s={7} />
        <Spacer />
        <StatusGroup $w={23}>
          <Svg s={14}><rect x="1" y="1" width="12" height="10" fill="#3b8fc4" stroke="#2a5f86" /><path d="M2.500 3.500C5 1.500 9 1.500 11.500 3.500V7H2.500Z" fill="#d8392f" stroke="none" /><path d="M2 8.500h10M5 5.500l2-2l2 2" stroke="#fff" /><path d="M4 13h6" stroke="#555" /></Svg>
        </StatusGroup>
        <StatusGroup $w={161}>
          <Bucket />
          <NoColor $s={16} as="span"><Cross /></NoColor>
          <span> Brak</span>
        </StatusGroup>
        <StatusGroup>
          <Nib />
          <OutlineColor />
          <span>C:0 M:0 Y:0 K:100  0,567 pkt</span>
        </StatusGroup>
      </StatusBar>
    </Window>
  );
}
